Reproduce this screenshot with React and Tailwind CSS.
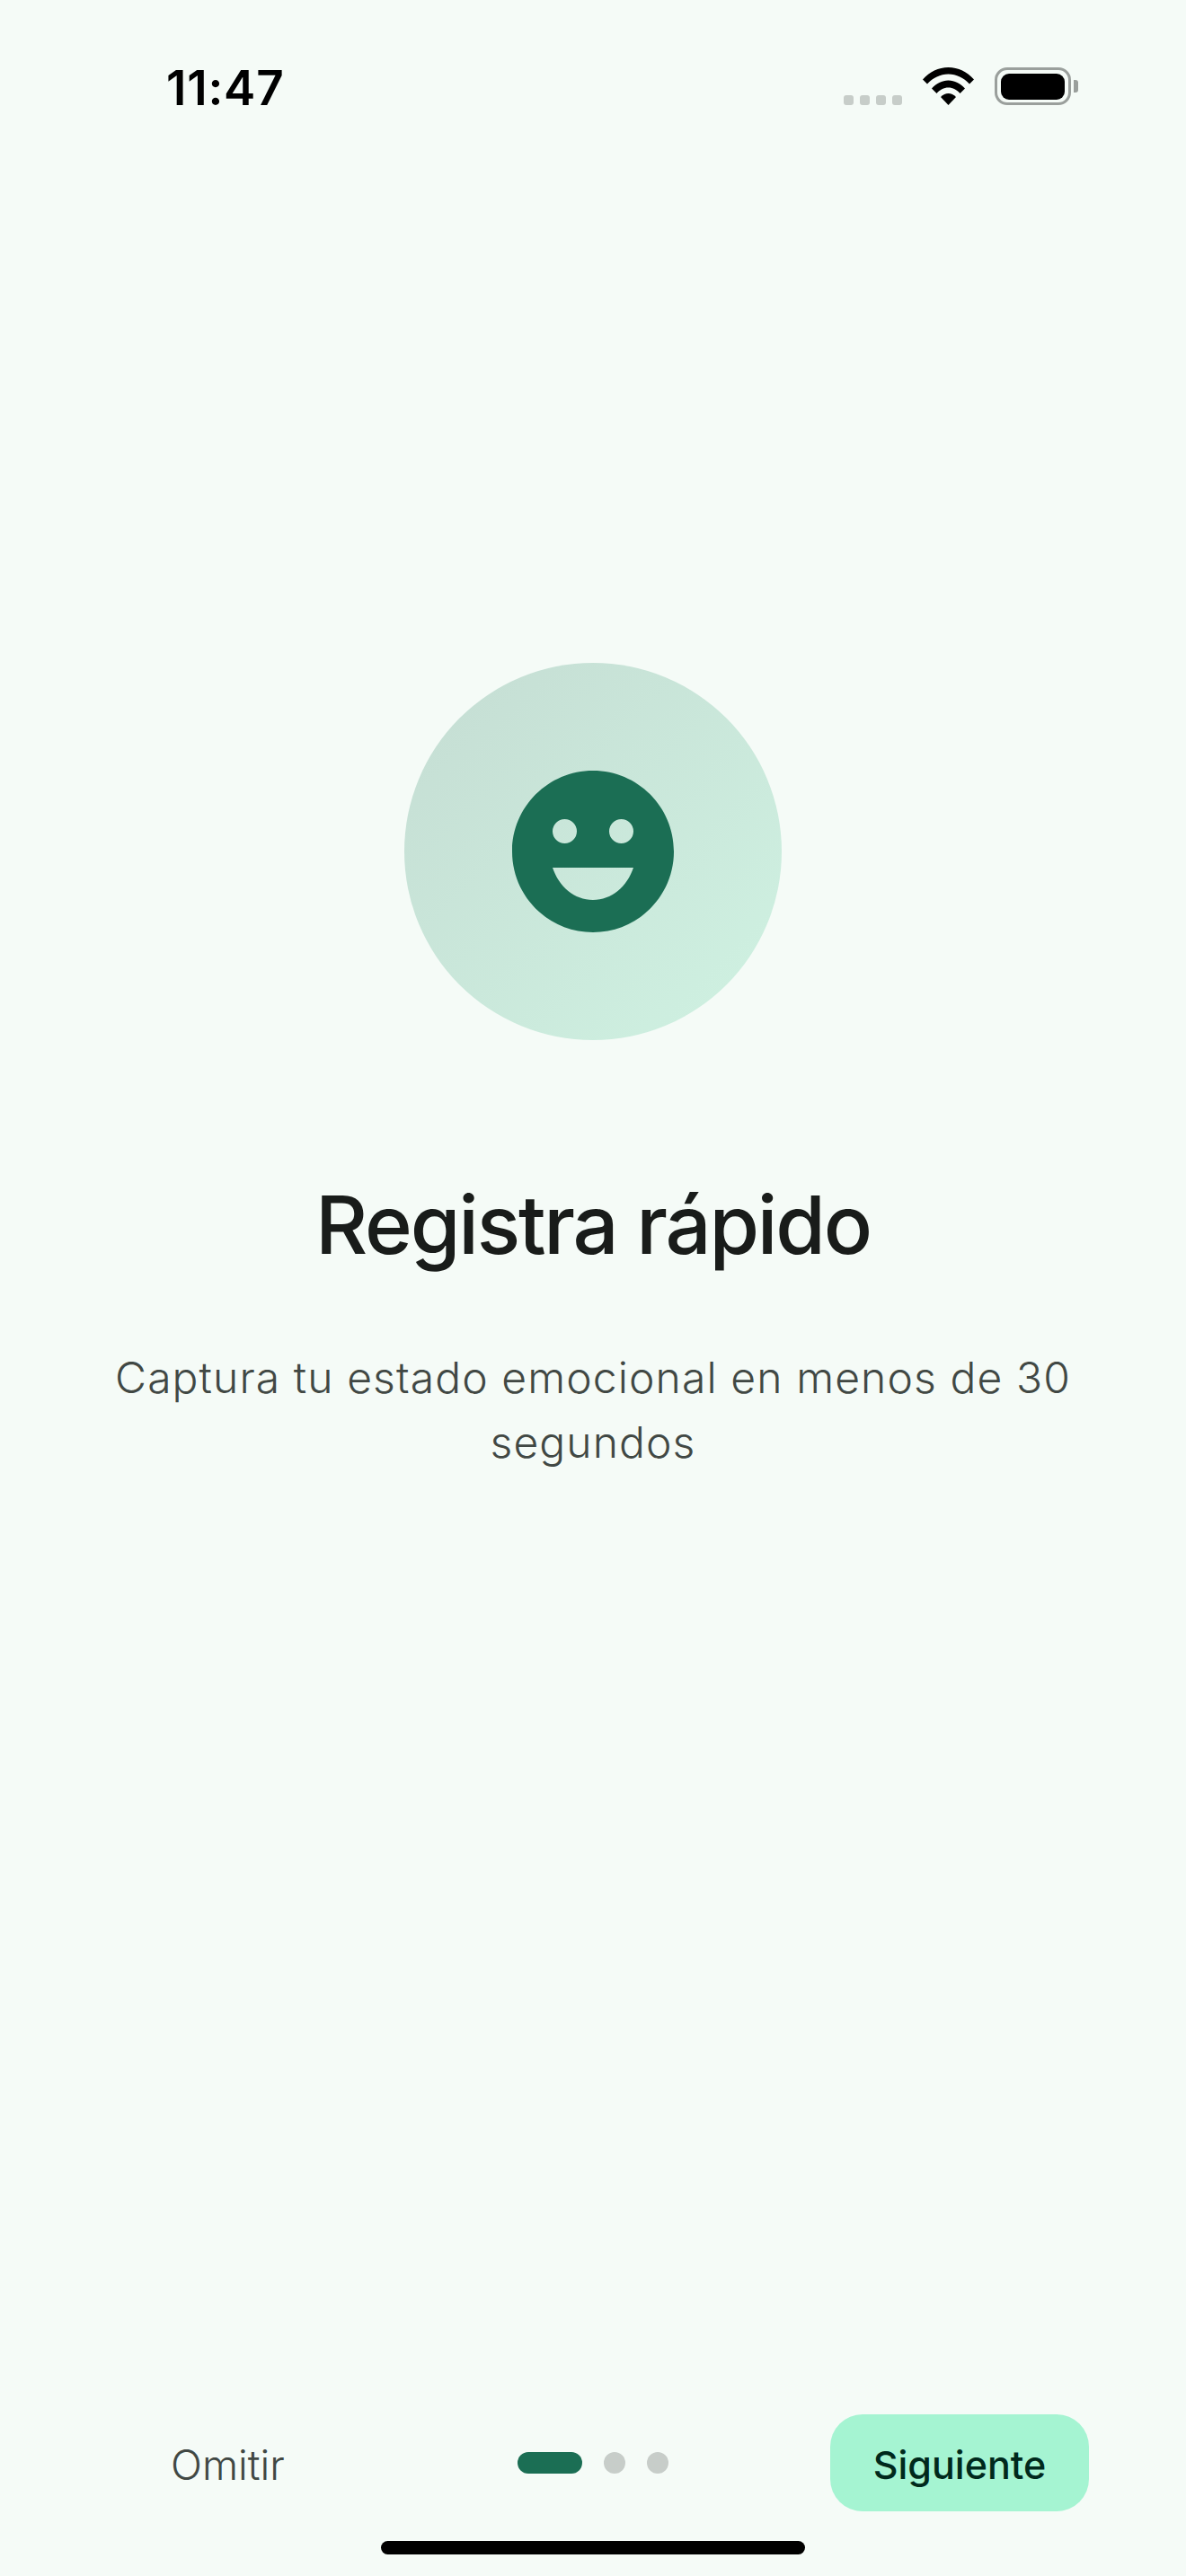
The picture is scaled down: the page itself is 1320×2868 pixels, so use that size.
import React from "react";

const font = "font-['Inter','Liberation_Sans',sans-serif]";

function StatusBar() {
  return (
    <div className="flex h-[150px] shrink-0 items-start justify-between pl-[185px] pr-[120px] pt-[68px]">
      <span className="text-[53px] font-semibold leading-[60px] tracking-[0.8px] text-black">11:47</span>
      <div className="flex items-end pt-[7px]">
        {/* signal */}
        <div className="flex gap-[7px]">
          <span className="h-[11px] w-[11px] rounded-[3px] bg-[#c7cdc9]" />
          <span className="h-[11px] w-[11px] rounded-[3px] bg-[#c7cdc9]" />
          <span className="h-[11px] w-[11px] rounded-[3px] bg-[#c7cdc9]" />
          <span className="h-[11px] w-[11px] rounded-[3px] bg-[#c7cdc9]" />
        </div>
        {/* wifi */}
        <svg className="ml-[23px]" width="57" height="42" viewBox="0 0 57 42">
          <path d="M0 13.5C7.5 5 17.500 0 28.500 0S49.500 5 57 13.500L52 18.500C45.500 11.500 37.500 7.500 28.500 7.500S11.500 11.500 5 18.500Z" fill="#000" />
          <path d="M10 23.500C15 18 21.500 14.500 28.500 14.500S42 18 47 23.500L41.500 29C38 25 33.500 22.500 28.500 22.500S19 25 15.500 29Z" fill="#000" />
          <path d="M20 33C22.500 30.500 25.500 29 28.500 29S34.500 30.500 37 33L28.500 42Z" fill="#000" />
        </svg>
        {/* battery */}
        <div className="ml-[23px] flex items-center">
          <div className="flex h-[42px] w-[85px] items-center justify-center rounded-[14px] border-[3px] border-[#9a9f9c]">
            <div className="h-[29px] w-[71px] rounded-[9px] bg-black" />
          </div>
          <div className="ml-[3px] h-[14px] w-[5px] rounded-r-[3px] bg-[#9a9f9c]" />
        </div>
      </div>
    </div>
  );
}

function MoodIcon() {
  return (
    <svg width="180" height="180" viewBox="2 2 20 20">
      <path
        fill="#1b6e54"
        fillRule="evenodd"
        d="M12 2C6.480 2 2 6.480 2 12s4.480 10 10 10 10-4.480 10-10S17.520 2 12 2zM8.500 8a1.500 1.500 0 1 1 0 3 1.500 1.500 0 0 1 0-3zm7 0a1.500 1.500 0 1 1 0 3 1.500 1.500 0 0 1 0-3zM12 18c-2.280 0-4.220-1.660-5-4h10c-.78 2.340-2.720 4-5 4z"
      />
    </svg>
  );
}

export default function App() {
  return (
    <div className={`flex h-[2868px] w-[1320px] flex-col overflow-hidden bg-[#f5fbf7] ${font}`}>
      <StatusBar />

      {/* contenido */}
      <div className="flex flex-1 flex-col items-center px-[108px] pt-[588px]">
        <div className="flex h-[420px] w-[420px] items-center justify-center rounded-full bg-gradient-to-br from-[#c5ddd3] to-[#cff2e2]">
          <MoodIcon />
        </div>
        <h1 className="mt-[150px] text-[90px] font-medium leading-[112px] tracking-[-2.2px] text-[#191c1a]">
          Registra rápido
        </h1>
        <p className="mt-[78px] text-center text-[48px] font-light leading-[72px] tracking-[1.1px] text-[#414844]">
          Captura tu estado emocional en menos de 30 segundos
        </p>
      </div>

      {/* navegacion inferior */}
      <div className="grid h-[108px] shrink-0 grid-cols-[1fr_auto_1fr] items-center px-[108px]">
        <button className="justify-self-start pl-[82px] pt-[3px] text-[46px] font-light leading-[56px] text-[#414844]">Omitir</button>
        <div className="flex items-center gap-[24px]">
          <span className="h-[24px] w-[72px] rounded-full bg-[#1b6e54]" />
          <span className="h-[24px] w-[24px] rounded-full bg-[#c7cdc9]" />
          <span className="h-[24px] w-[24px] rounded-full bg-[#c7cdc9]" />
        </div>
        <button className="flex h-[108px] w-[288px] items-center justify-center justify-self-end rounded-[36px] bg-[#a5f4d2] pt-[3px] text-[43px] font-medium leading-[56px] text-[#00291c]">
          Siguiente
        </button>
      </div>

      {/* home indicator */}
      <div className="flex h-[72px] shrink-0 justify-center pt-[33px]">
        <div className="h-[15px] w-[472px] rounded-full bg-black" />
      </div>
    </div>
  );
}
